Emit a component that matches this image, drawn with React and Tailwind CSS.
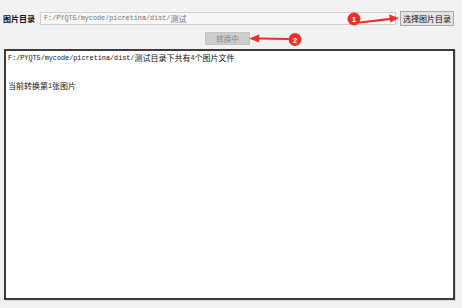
import React from "react";

const CJK = /([\u3000-\u9fff\uff00-\uffef]+)/;

// SimSun-style mix: ascii runs half width, CJK runs full width
function Mixed({ text }) {
  return text.split(CJK).map((part, i) =>
    CJK.test(part) ? (
      <span key={i} className="text-[8px] leading-none [font-family:'Noto_Sans_CJK_SC',sans-serif]">
        {part}
      </span>
    ) : (
      <span key={i} className="text-[6.8px] leading-none [font-family:'Liberation_Mono',monospace]">
        {part}
      </span>
    )
  );
}

function Annotations() {
  return (
    <svg
      className="absolute inset-0 pointer-events-none"
      width="462"
      height="308"
      viewBox="0 0 462 308"
    >
      {/* arrow 1 */}
      <line x1="360" y1="22.5" x2="391" y2="18.8" stroke="#e8322b" strokeWidth="2.2" strokeLinecap="round" />
      <polygon points="399,18 389,14.5 390.5,22.5" fill="#e8322b" />
      <circle cx="354" cy="19" r="6.5" fill="#e8322b" />
      <text x="354" y="22" textAnchor="middle" fontSize="8" fontWeight="700" fill="#fff" fontFamily="Liberation Sans, sans-serif">1</text>

      {/* arrow 2 */}
      <line x1="288" y1="39" x2="258" y2="38.5" stroke="#e8322b" strokeWidth="2.2" strokeLinecap="round" />
      <polygon points="249,38.5 259,34.5 259,42.5" fill="#e8322b" />
      <circle cx="295" cy="39.5" r="6.5" fill="#e8322b" />
      <text x="295" y="42.5" textAnchor="middle" fontSize="8" fontWeight="700" fill="#fff" fontFamily="Liberation Sans, sans-serif">2</text>
    </svg>
  );
}

export default function App() {
  return (
    <div className="relative w-[462px] h-[308px] bg-[#f2f2f2] overflow-hidden text-[#111]">
      {/* Top row: directory */}
      <div className="flex items-center h-[15px] mt-[11px] pl-[3px] pr-[8px]">
        <span className="w-[34px] text-[8px] font-semibold leading-none [font-family:'Noto_Sans_CJK_SC',sans-serif] text-[#111]">
          图片目录
        </span>
        <div className="ml-[3px] flex-1 h-[13px] flex items-center pl-[3px] bg-[#f7f7f7] border border-[#cfcfcf] text-[#707070] whitespace-nowrap overflow-hidden">
          <Mixed text="F:/PYQT5/mycode/picretina/dist/测试" />
        </div>
        <button className="ml-[4px] w-[54px] h-[15px] flex items-center justify-center bg-[#e3e3e3] border border-[#a9a9a9] text-[8px] leading-none [font-family:'Noto_Sans_CJK_SC',sans-serif] text-[#111]">
          选择图片目录
        </button>
      </div>

      {/* Convert button row */}
      <div className="flex justify-start pl-[205px] mt-[6px]">
        <button className="w-[45px] h-[13px] flex items-center justify-center bg-[#cdcdcd] border border-[#c4c4c4] text-[7.5px] leading-none [font-family:'Noto_Sans_CJK_SC',sans-serif] text-[#8a8a8a]">
          转换中
        </button>
      </div>

      {/* Log area */}
      <div className="ml-[4px] mt-[4px] w-[451px] h-[251px] bg-white border-2 border-[#3c3c3c] shadow-[1px_1px_0_#d8d8d8] pl-[2px] whitespace-nowrap">
        <div className="h-[14px] flex items-center">
          <Mixed text="F:/PYQT5/mycode/picretina/dist/测试目录下共有4个图片文件" />
        </div>
        <div className="h-[14px]" />
        <div className="h-[14px] flex items-center">
          <Mixed text="当前转换第1张图片" />
        </div>
      </div>

      <Annotations />
    </div>
  );
}
